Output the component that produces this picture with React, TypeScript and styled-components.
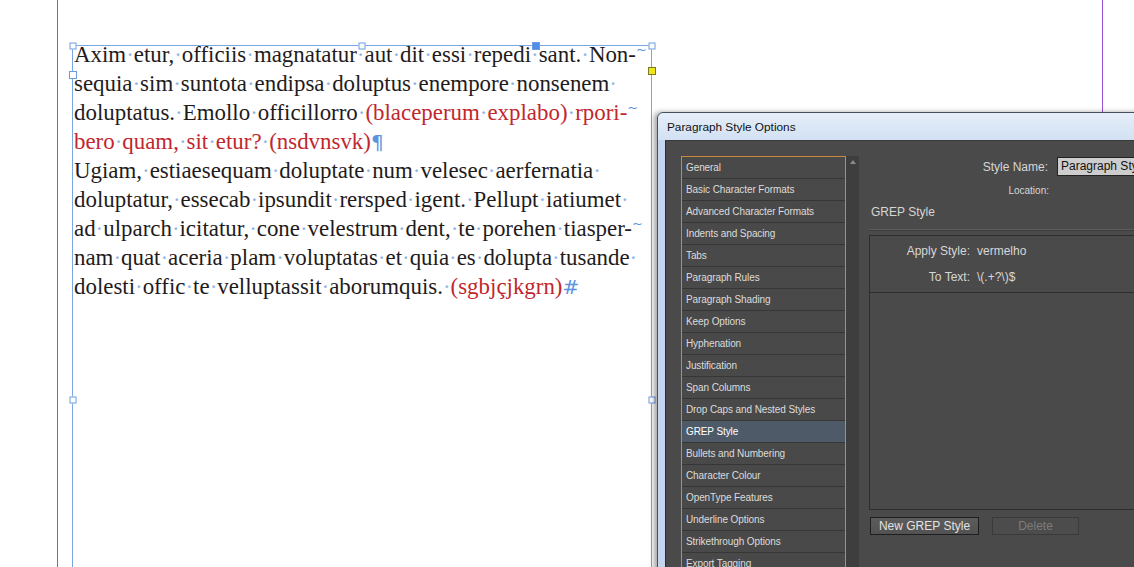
import React from 'react';
import styled, { createGlobalStyle } from 'styled-components';

const GlobalStyle = createGlobalStyle`
  html, body { margin: 0; padding: 0; height: 100%; overflow: hidden; }
  body { background: #fff; }
  #root { height: 100%; }
`;

const Canvas = styled.div`
  position: relative;
  width: 100%;
  height: 100%;
  overflow: hidden;
  background: #fff;
`;

const Guide = styled.div<{ $left: number }>`
  position: absolute;
  top: 0;
  bottom: 0;
  left: ${p => p.$left}px;
  width: 1px;
  background: #9b52d6;
`;

/* ---------- text frame ---------- */

const TextFrame = styled.div`
  position: absolute;
  left: 72px;
  top: 45px;
  width: 580px;
  height: 640px;
  box-sizing: border-box;
  border: 1px solid #7aa6e2;
`;

const Handle = styled.span<{ $x: number; $y: number; $kind?: 'plain' | 'solid' | 'port' | 'out' }>`
  position: absolute;
  left: ${p => p.$x}px;
  top: ${p => p.$y}px;
  width: ${p => (p.$kind === 'plain' || !p.$kind ? 7 : 8)}px;
  height: ${p => (p.$kind === 'plain' || !p.$kind ? 7 : 8)}px;
  transform: translate(-50%, -50%);
  box-sizing: border-box;
  border: 1px solid ${p => (p.$kind === 'out' ? '#7a7a20' : '#6d9ce0')};
  background: ${p => (p.$kind === 'solid' ? '#4f8fea' : p.$kind === 'out' ? '#f2e41a' : '#fff')};
`;

const Story = styled.div`
  padding: 0 0 0 1px;
  margin-top: -6px;
  font-family: "Liberation Serif", "Times New Roman", serif;
  font-size: 22.9px;
  line-height: 29px;
  color: #1f1b1c;
  white-space: nowrap;
`;

const Line = styled.div`
  height: 29px;
`;

const Red = styled.span`
  color: #c1272d;
`;

const Dot = styled.span`
  color: #8fb4e6;
`;

const Mark = styled.span<{ $up?: boolean }>`
  position: relative;
  top: ${p => (p.$up ? -8 : 0)}px;
  line-height: 0;
  color: #5b93e0;
  font-size: ${p => (p.$up ? 13 : 20)}px;
  font-family: "DejaVu Sans", sans-serif;
`;

function words(text: string) {
  const parts = text.split(' ');
  return parts.map((w, i) => (
    <React.Fragment key={i}>
      {w}
      {i < parts.length - 1 && <Dot>·</Dot>}
    </React.Fragment>
  ));
}

/* ---------- dialog ---------- */

const Dialog = styled.div`
  position: absolute;
  left: 657px;
  top: 112px;
  width: 640px;
  height: 520px;
  display: flex;
  flex-direction: column;
  box-sizing: border-box;
  border: 1px solid #46505c;
  border-radius: 6px 0 0 0;
  background: linear-gradient(90deg, #c4d6ee, #d3e2f4 40%, #c9daf1);
  box-shadow: -3px 0 5px rgba(0, 0, 0, 0.35);
`;

const TitleBar = styled.div`
  height: 27px;
  display: flex;
  align-items: center;
  padding-left: 9px;
  background: linear-gradient(#e6eef9, #d2e1f3);
  border-radius: 6px 0 0 0;
  font-family: "Liberation Sans", Arial, sans-serif;
  font-size: 11.8px;
  color: #111;
`;

const Body = styled.div`
  flex: 1;
  margin-left: 7px;
  display: flex;
  gap: 10px;
  padding: 15px 0 0 15px;
  background: #4a4a4a;
  border-left: 1px solid #2c2c2c;
  border-top: 1px solid #3a3a3a;
  font-family: "Liberation Sans", Arial, sans-serif;
`;

const ListWrap = styled.div`
  display: flex;
  flex-shrink: 0;
  align-self: flex-start;
`;

const List = styled.ul`
  list-style: none;
  margin: 0;
  padding: 0;
  width: 163px;
  border: 1px solid #c98a3e;
  border-bottom: none;
`;

const Item = styled.li<{ $active?: boolean }>`
  height: 21px;
  line-height: 21px;
  padding-left: 4px;
  border-bottom: 1px solid #363636;
  background: ${p => (p.$active ? '#4f5a69' : '#494949')};
  color: ${p => (p.$active ? '#fff' : '#dcdcdc')};
  font-size: 10px;
  letter-spacing: -0.1px;
  white-space: nowrap;
`;

const Scrollbar = styled.div`
  width: 13px;
  height: 420px;
  background: #3e3e3e;
  display: flex;
  justify-content: center;
  padding-top: 4px;
`;

const ArrowUp = styled.span`
  width: 0;
  height: 0;
  border-left: 3px solid transparent;
  border-right: 3px solid transparent;
  border-bottom: 4px solid #8a8a8a;
`;

const Pane = styled.div`
  width: 420px;
  flex-shrink: 0;
  display: flex;
  flex-direction: column;
  color: #d6d6d6;
`;

const FieldRow = styled.div<{ $top: number }>`
  display: flex;
  align-items: center;
  gap: 9px;
  margin-top: ${p => p.$top}px;
`;

const FieldLabel = styled.span<{ $w: number; $size?: number }>`
  width: ${p => p.$w}px;
  flex-shrink: 0;
  text-align: right;
  font-size: ${p => p.$size ?? 12}px;
  white-space: nowrap;
`;

const TextInput = styled.div`
  width: 160px;
  flex-shrink: 0;
  height: 19px;
  box-sizing: border-box;
  border: 1px solid #222;
  background: #cdcdcd;
  color: #111;
  font-size: 12px;
  line-height: 17px;
  padding-left: 3px;
  white-space: nowrap;
`;

const SectionTitle = styled.div`
  margin: 9px 0 0 2px;
  font-size: 12px;
  line-height: 14px;
`;

const Rule = styled.div`
  margin-top: 10px;
  height: 1px;
  background: #5c5c5c;
  border-bottom: 1px solid #3d3d3d;
`;

const GrepBox = styled.div`
  margin-top: 4px;
  height: 275px;
  box-sizing: border-box;
  border: 1px solid #2e2e2e;
  padding-top: 2px;
`;

const GrepRow = styled.div`
  height: 26px;
  display: flex;
  align-items: center;
  gap: 7px;
  font-size: 12px;
`;

const GrepValue = styled.span`
  white-space: nowrap;
`;

const GrepRule = styled.div`
  margin-top: 2px;
  height: 1px;
  background: #2e2e2e;
`;

const Buttons = styled.div`
  margin-top: 7px;
  display: flex;
  gap: 13px;
  padding-left: 1px;
`;

const Button = styled.button<{ $w: number; $disabled?: boolean }>`
  width: ${p => p.$w}px;
  height: 18px;
  padding: 0;
  border: 1px solid ${p => (p.$disabled ? '#3a3a3a' : '#1e1e1e')};
  background: ${p => (p.$disabled ? '#4c4c4c' : 'linear-gradient(#5c5c5c, #525252)')};
  color: ${p => (p.$disabled ? '#7c7c7c' : '#e2e2e2')};
  font-family: "Liberation Sans", Arial, sans-serif;
  font-size: 12px;
`;

const sections = [
  'General',
  'Basic Character Formats',
  'Advanced Character Formats',
  'Indents and Spacing',
  'Tabs',
  'Paragraph Rules',
  'Paragraph Shading',
  'Keep Options',
  'Hyphenation',
  'Justification',
  'Span Columns',
  'Drop Caps and Nested Styles',
  'GREP Style',
  'Bullets and Numbering',
  'Character Colour',
  'OpenType Features',
  'Underline Options',
  'Strikethrough Options',
  'Export Tagging',
];

export default function App() {
  return (
    <Canvas>
      <GlobalStyle />
      <Guide $left={57} />
      <Guide $left={1102} />

      <TextFrame>
        <Story>
          <Line>{words('Axim etur, officiis magnatatur aut dit essi repedi sant. Non-')}<Mark $up>~</Mark></Line>
          <Line>{words('sequia sim suntota endipsa doluptus enempore nonsenem ')}</Line>
          <Line>
            {words('doluptatus. Emollo officillorro ')}
            <Red>{words('(blaceperum explabo) rpori-')}</Red>
            <Mark $up>~</Mark>
          </Line>
          <Line>
            <Red>{words('bero quam, sit etur? (nsdvnsvk)')}</Red>
            <Mark>¶</Mark>
          </Line>
          <Line>{words('Ugiam, estiaesequam doluptate num velesec aerfernatia ')}</Line>
          <Line>{words('doluptatur, essecab ipsundit rersped igent. Pellupt iatiumet ')}</Line>
          <Line>{words('ad ulparch icitatur, cone velestrum dent, te porehen tiasper-')}<Mark $up>~</Mark></Line>
          <Line>{words('nam quat aceria plam voluptatas et quia es dolupta tusande ')}</Line>
          <Line>
            {words('dolesti offic te velluptassit aborumquis. ')}
            <Red>(sgbjçjkgrn)</Red>
            <Mark>#</Mark>
          </Line>
        </Story>
        <Handle $x={0} $y={0} />
        <Handle $x={289} $y={0} />
        <Handle $x={579} $y={0} />
        <Handle $x={0} $y={354} />
        <Handle $x={579} $y={354} />
        <Handle $x={463} $y={0} $kind="solid" />
        <Handle $x={0} $y={29} $kind="port" />
        <Handle $x={579} $y={25} $kind="out" />
      </TextFrame>

      <Dialog>
        <TitleBar>Paragraph Style Options</TitleBar>
        <Body>
          <ListWrap>
            <List>
              {sections.map(s => (
                <Item key={s} $active={s === 'GREP Style'}>{s}</Item>
              ))}
            </List>
            <Scrollbar>
              <ArrowUp />
            </Scrollbar>
          </ListWrap>

          <Pane>
            <FieldRow $top={1}>
              <FieldLabel $w={179}>Style Name:</FieldLabel>
              <TextInput>Paragraph Style 1</TextInput>
            </FieldRow>
            <FieldRow $top={9}>
              <FieldLabel $w={180} $size={10}>Location:</FieldLabel>
            </FieldRow>
            <SectionTitle>GREP Style</SectionTitle>
            <Rule />
            <GrepBox>
              <GrepRow>
                <FieldLabel $w={100}>Apply Style:</FieldLabel>
                <GrepValue>vermelho</GrepValue>
              </GrepRow>
              <GrepRow>
                <FieldLabel $w={100}>To Text:</FieldLabel>
                <GrepValue>\(.+?\)$</GrepValue>
              </GrepRow>
              <GrepRule />
            </GrepBox>
            <Buttons>
              <Button $w={109}>New GREP Style</Button>
              <Button $w={87} $disabled>Delete</Button>
            </Buttons>
          </Pane>
        </Body>
      </Dialog>
    </Canvas>
  );
}
